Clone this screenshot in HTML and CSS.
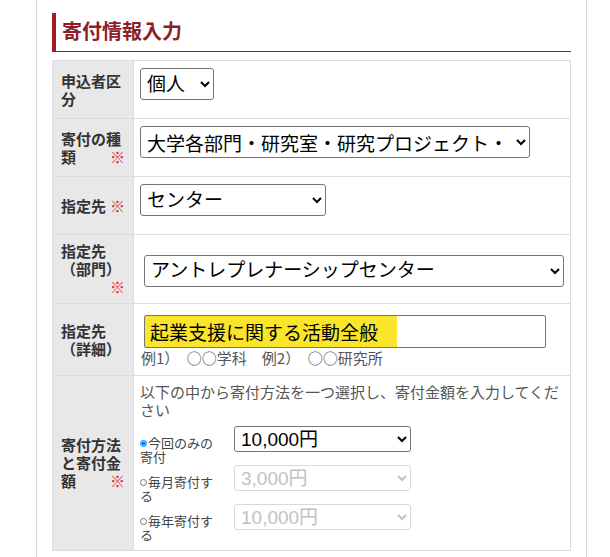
FILE: index.html
```html
<!DOCTYPE html>
<html lang="ja">
<head>
    <meta charset="UTF-8">
    <meta name="viewport" content="width=device-width, initial-scale=1.0">
    <title>寄付情報入力</title>
    <link rel="stylesheet" href="styles.css">
</head>
<body>
    <div class="panel">
        <h2 class="section-title">寄付情報入力</h2>

        <table class="form-table">
            <colgroup>
                <col class="col-label">
                <col>
            </colgroup>
            <tr>
                <th>申込者区分</th>
                <td>
                    <select class="sel sel-applicant">
                        <option>個人</option>
                        <option>法人</option>
                    </select>
                </td>
            </tr>
            <tr>
                <th>寄付の種類<span class="req">※</span></th>
                <td>
                    <select class="sel sel-kind">
                        <option>大学各部門・研究室・研究プロジェクト・教員への寄付</option>
                    </select>
                </td>
            </tr>
            <tr>
                <th>指定先 <span class="req">※</span></th>
                <td>
                    <select class="sel sel-target">
                        <option>センター</option>
                    </select>
                </td>
            </tr>
            <tr>
                <th>指定先<br>（部門）<span class="req">※</span></th>
                <td class="inset">
                    <select class="sel sel-dept">
                        <option>アントレプレナーシップセンター</option>
                    </select>
                </td>
            </tr>
            <tr>
                <th>指定先<br>（詳細）</th>
                <td class="inset">
                    <input type="text" class="text-input marked" value="起業支援に関する活動全般">
                    <div class="hint">例1）　○○学科　例2）　○○研究所</div>
                </td>
            </tr>
            <tr>
                <th>寄付方法と寄付金額<span class="req">※</span></th>
                <td>
                    <p class="lead">以下の中から寄付方法を一つ選択し、寄付金額を入力してください</p>
                    <div class="option">
                        <label class="option-label"><input type="radio" name="method" checked>今回のみの寄付</label>
                        <select class="sel sel-amount">
                            <option>10,000円</option>
                        </select>
                    </div>
                    <div class="option">
                        <label class="option-label"><input type="radio" name="method">毎月寄付する</label>
                        <select class="sel sel-amount" disabled>
                            <option>3,000円</option>
                        </select>
                    </div>
                    <div class="option">
                        <label class="option-label"><input type="radio" name="method">毎年寄付する</label>
                        <select class="sel sel-amount" disabled>
                            <option>10,000円</option>
                        </select>
                    </div>
                </td>
            </tr>
        </table>
    </div>
</body>
</html>
```

FILE: styles.css
```css
body {
    margin: 0;
    background: #fff;
    font-family: "Noto Sans CJK JP", sans-serif;
    color: #333;
}

.panel {
    box-sizing: border-box;
    width: 551px;
    min-height: 100vh;
    margin-left: 36px;
    padding: 13px 15px 0;
    border-left: 1px solid #d6d6d6;
    border-right: 1px solid #d6d6d6;
}

.section-title {
    margin: 0 0 8px;
    padding: 8px 0 10px 6px;
    border-left: 4px solid #a11c26;
    border-bottom: 1px solid #8e1f28;
    font-size: 20px;
    line-height: 20px;
    font-weight: bold;
    color: #8e1f28;
}

.form-table {
    width: 100%;
    border-collapse: collapse;
    table-layout: fixed;
}

.col-label {
    width: 81px;
}

.form-table th,
.form-table td {
    border: 1px solid #dcdcdc;
    padding: 7px 6px;
    vertical-align: middle;
}

.form-table th {
    padding: 7px 8px;
    background-color: #e8e8e8;
    text-align: left;
    font-size: 15px;
    line-height: 18px;
    font-weight: bold;
    color: #333;
}

.form-table td.inset {
    padding: 11px 10px 8px;
}

.req {
    float: right;
    color: #e0262b;
}

.sel {
    box-sizing: border-box;
    height: 32px;
    margin: 0 0 11px;
    padding: 0 2px;
    font-family: "Liberation Sans", "Noto Sans CJK JP", sans-serif;
    font-size: 19px;
    color: #000;
    background-color: #fff;
    border: 1px solid #767676;
    border-radius: 3px;
    vertical-align: top;
}

.sel:disabled {
    color: #a8a8a8;
    border-color: #c9c9c9;
}

.sel-applicant { width: 74px; }
.sel-kind {
    width: 390px;
    padding-right: 9px;
    font-family: "Noto Sans CJK JP", sans-serif;
}
.sel-target { width: 186px; }
.sel-dept { width: 420px; margin: 0; }

.sel-amount {
    width: 177px;
    height: 26px;
    margin: 0;
}

.text-input {
    box-sizing: border-box;
    display: block;
    width: 402px;
    height: 33px;
    margin: 0;
    padding: 0 5px;
    font-family: "Noto Sans CJK JP", sans-serif;
    font-size: 19px;
    color: #000;
    border: 1px solid #767676;
    border-radius: 2px;
}

.text-input.marked {
    background: linear-gradient(to right, #fbe52a 252px, #fff 252px);
}

.hint {
    margin-top: 1px;
    margin-left: -3px;
    font-family: "Noto Sans CJK JP", sans-serif;
    font-size: 15px;
    line-height: 18px;
    color: #555;
}

.lead {
    margin: 0 0 7px;
    font-size: 15px;
    line-height: 18px;
    color: #555;
}

.option {
    display: flex;
    align-items: flex-start;
    margin-bottom: 1px;
}

.option-label {
    width: 80px;
    margin-right: 14px;
    padding-top: 10px;
    font-size: 13px;
    line-height: 14px;
    color: #444;
}

.option-label input {
    width: 7px;
    height: 7px;
    margin: 0 1px 0 0;
    vertical-align: 1px;
}
```
